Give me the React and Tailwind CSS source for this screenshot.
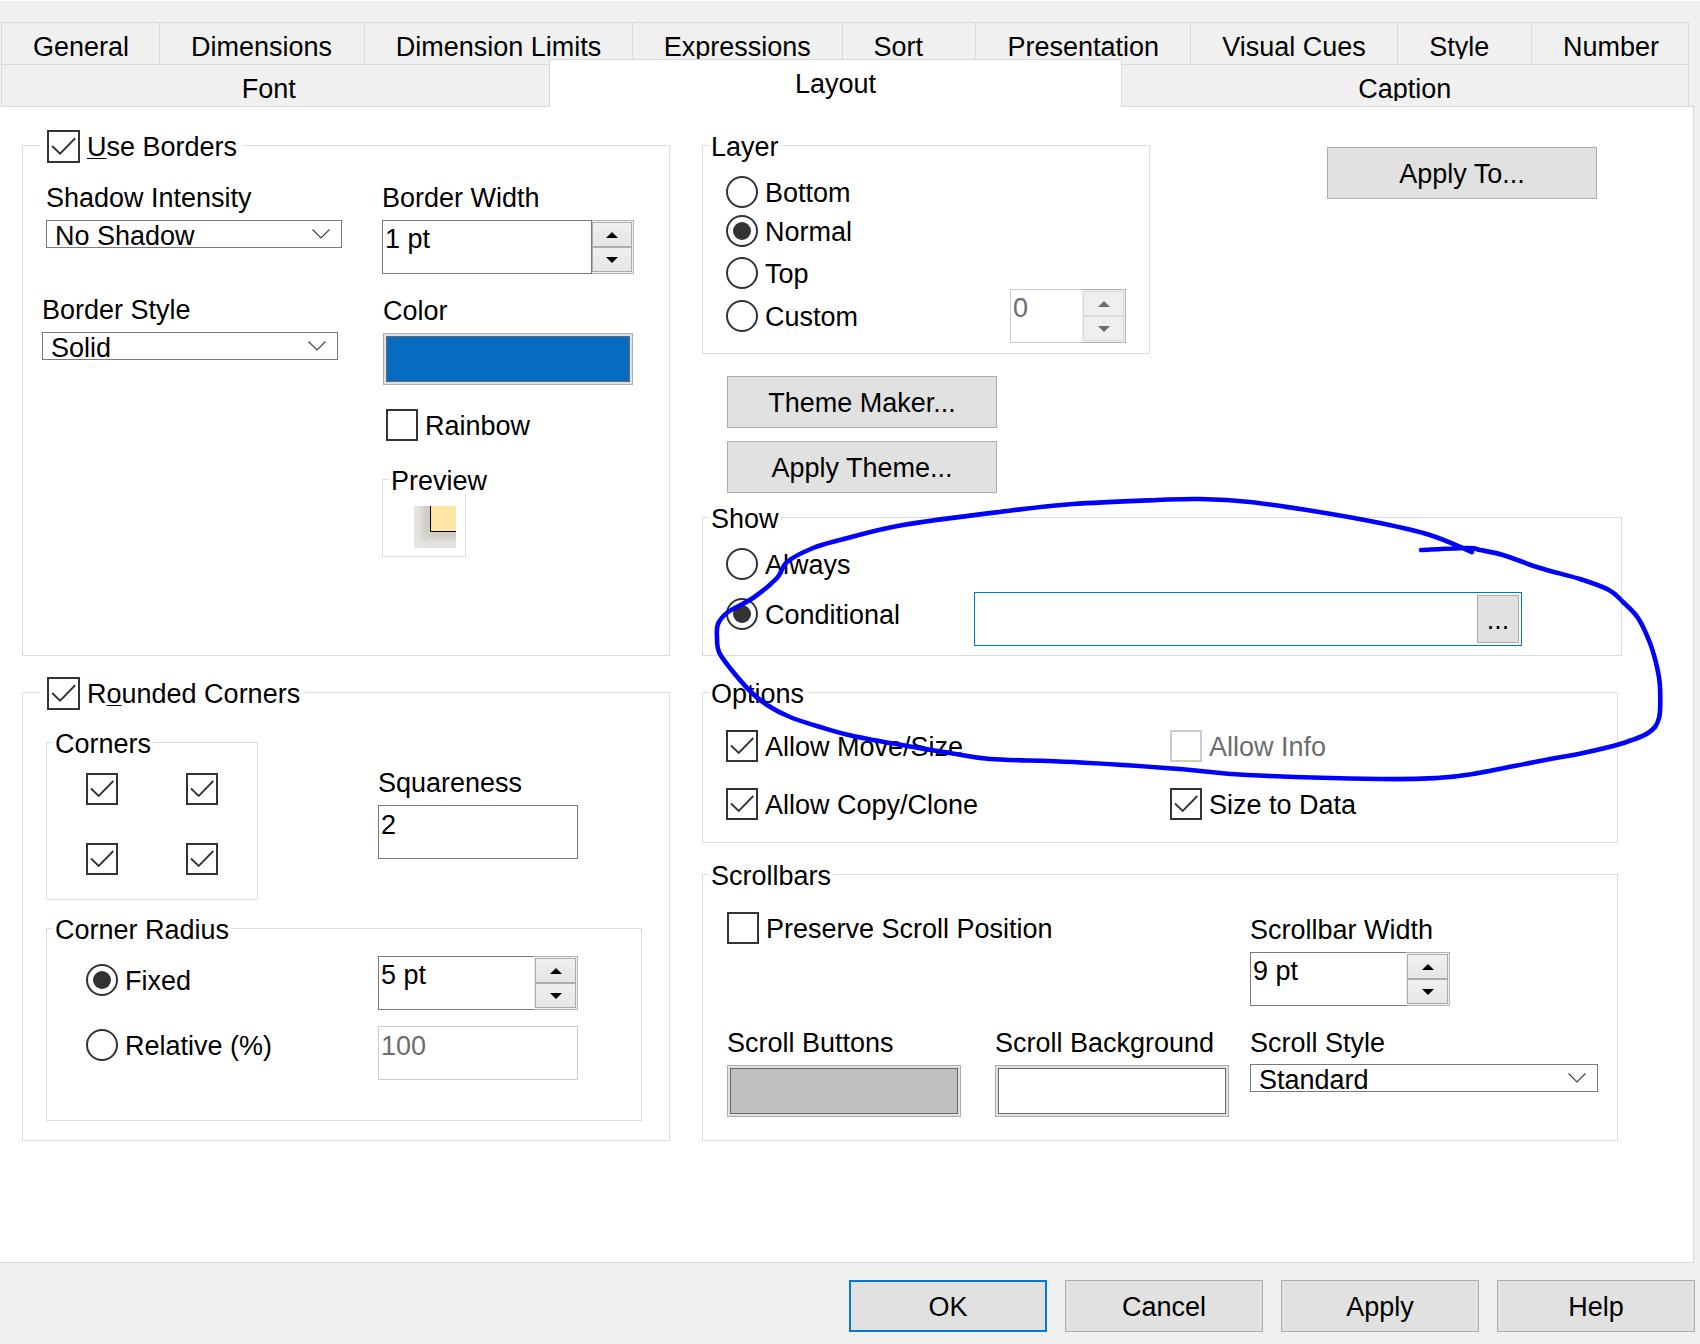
import React, { useId } from "react";

const BASE_TABS = [
  { name: "General" },
  { name: "Dimensions" },
  { name: "Dimension Limits" },
  { name: "Expressions" },
  { name: "Sort" },
  { name: "Presentation" },
  { name: "Visual Cues" },
  { name: "Style", clip: true },
  { name: "Number" },
];

// Points of the hand-drawn loop around the Show group.
const LOOP = [
  [1421, 550], [1468, 548], [1480, 550], [1503, 555], [1540, 568], [1580, 579], [1609, 590],
  [1623, 602], [1638, 618], [1650, 643], [1657, 667], [1660, 687], [1659, 718],
  [1648, 733], [1620, 744], [1583, 753], [1540, 761], [1473, 774], [1437, 778],
  [1380, 779], [1247, 775], [1180, 769], [1073, 762], [990, 759], [950, 753],
  [907, 746], [853, 736], [820, 727], [790, 717], [767, 705], [750, 691],
  [730, 668], [719, 652], [717, 638], [718, 624], [728, 612], [753, 598],
  [777, 578], [787, 562], [813, 548], [840, 540], [903, 525], [1007, 511],
  [1073, 504], [1157, 500], [1200, 499], [1250, 502], [1313, 511], [1380, 523],
  [1430, 535], [1472, 552],
];

function smoothPath(points) {
  let d = `M${points[0][0]} ${points[0][1]}`;
  for (let i = 0; i < points.length - 1; i++) {
    const p0 = points[i - 1] || points[i];
    const p1 = points[i];
    const p2 = points[i + 1];
    const p3 = points[i + 2] || p2;
    const c1 = [p1[0] + (p2[0] - p0[0]) / 6, p1[1] + (p2[1] - p0[1]) / 6];
    const c2 = [p2[0] - (p3[0] - p1[0]) / 6, p2[1] - (p3[1] - p1[1]) / 6];
    d += `C${c1[0]} ${c1[1]} ${c2[0]} ${c2[1]} ${p2[0]} ${p2[1]}`;
  }
  return d;
}

function Group({ title, className = "", legendClass = "", children }) {
  return (
    <fieldset className={`min-w-0 border border-[#dcdcdc] ${className}`}>
      <legend className={`ml-1.5 px-0.5 pt-[3px] leading-[26px] whitespace-nowrap ${legendClass}`}>{title}</legend>
      {children}
    </fieldset>
  );
}

function CheckGroup({ title, className = "", children }) {
  return (
    <fieldset className={`min-w-0 border border-[#dcdcdc] ${className}`}>
      <legend className="ml-[17px] pt-0.5 pr-[5px] pl-[7px]">
        <Check label={title} checked large />
      </legend>
      {children}
    </fieldset>
  );
}

function Check({ label, ariaLabel, checked, disabled, large }) {
  return (
    <label
      className={`flex w-fit items-center gap-[7px] leading-[30px] whitespace-nowrap ${disabled ? "text-[#6d6d6d]" : ""}`}
    >
      <span className={`grid shrink-0 ${large ? "size-[33px]" : "size-8"}`}>
        <input
          type="checkbox"
          defaultChecked={checked}
          disabled={disabled}
          aria-label={ariaLabel}
          className="peer col-start-1 row-start-1 size-full appearance-none border-2 border-[#333] bg-white disabled:border-[#ccc]"
        />
        <svg
          viewBox="0 0 32 32"
          className="pointer-events-none invisible col-start-1 row-start-1 size-full peer-checked:visible"
          fill="none"
          stroke="#333"
          strokeWidth="1.8"
          aria-hidden="true"
        >
          <path d="M5 15.5L12.7 23L27.3 8" />
        </svg>
      </span>
      {label && <span className={large ? "" : "pt-0.5"}>{label}</span>}
    </label>
  );
}

function Radio({ label, name, checked, className = "" }) {
  return (
    <label className={`flex w-fit items-center gap-[7px] leading-[30px] whitespace-nowrap ${className}`}>
      <span className="grid size-8 shrink-0 place-items-center">
        <input
          type="radio"
          name={name}
          defaultChecked={checked}
          className="peer col-start-1 row-start-1 size-8 appearance-none rounded-full border-2 border-[#333] bg-white"
        />
        <span className="pointer-events-none invisible col-start-1 row-start-1 size-[18px] rounded-full bg-[#333] peer-checked:visible" />
      </span>
      <span className="pt-0.5">{label}</span>
    </label>
  );
}

function Dropdown({ label, value, labelClass = "mb-[7px]", className = "" }) {
  const id = useId();
  return (
    <div className={className}>
      <label htmlFor={id} className={`block leading-[30px] ${labelClass}`}>
        {label}
      </label>
      <div className="grid items-center">
        <select
          id={id}
          defaultValue={value}
          className="col-start-1 row-start-1 h-7 w-full appearance-none border border-[#7a7a7a] bg-white pt-0.5 pl-2 leading-[26px]"
        >
          <option>{value}</option>
        </select>
        <svg
          className="pointer-events-none col-start-1 row-start-1 mr-3 h-3 w-[18px] justify-self-end"
          viewBox="0 0 18 12"
          fill="none"
          stroke="#444"
          strokeWidth="1.2"
          aria-hidden="true"
        >
          <path d="M0.5 1.5L9 10L17.5 1.5" />
        </svg>
      </div>
    </div>
  );
}

function Arrow({ down, disabled }) {
  return (
    <svg width="12" height="6" viewBox="0 0 12 6" fill={disabled ? "#6d6d6d" : "#000"} aria-hidden="true">
      <path d={down ? "M0 0H12L6 6Z" : "M0 6H12L6 0Z"} />
    </svg>
  );
}

function Spinner({ id, value, ariaLabel, disabled, divider, className = "" }) {
  const step = disabled
    ? "flex h-[25px] w-full items-center justify-center border border-[#d9d9d9] bg-[#efefef]"
    : "flex h-[25px] w-full items-center justify-center border border-[#acacac] bg-linear-to-b from-[#f0f0f0] to-[#e5e5e5]";
  return (
    <div className={`flex ${className}`}>
      <input
        id={id}
        type="text"
        aria-label={ariaLabel}
        defaultValue={value}
        disabled={disabled}
        className={`min-w-0 flex-1 border-y border-l bg-white px-0.5 pt-[3px] pb-[19px] leading-[30px] ${
          disabled ? "border-[#ccc] text-[#6d6d6d]" : "border-[#7a7a7a]"
        } ${divider ? "border-r" : ""}`}
      />
      <div
        className={`shrink-0 border-y border-r border-[#b4b4b8] bg-[#f0f0f0] py-px pr-px ${
          divider ? "w-[42px]" : "w-11 pl-px"
        }`}
      >
        <button type="button" aria-label="Increase" disabled={disabled} className={step}>
          <Arrow disabled={disabled} />
        </button>
        <button type="button" aria-label="Decrease" disabled={disabled} className={step}>
          <Arrow down disabled={disabled} />
        </button>
      </div>
    </div>
  );
}

function TextBox({ id, value, disabled, ariaLabel }) {
  return (
    <input
      id={id}
      type="text"
      aria-label={ariaLabel}
      defaultValue={value}
      disabled={disabled}
      className="block w-full min-w-0 border border-[#7a7a7a] bg-white px-0.5 pt-1 pb-[18px] leading-[30px] disabled:border-[#ccc] disabled:text-[#6d6d6d]"
    />
  );
}

function Swatch({ label, color, className = "" }) {
  const id = useId();
  return (
    <div className={className}>
      <label htmlFor={id} className="mb-[7px] block leading-[30px] whitespace-nowrap">
        {label}
      </label>
      <button id={id} type="button" className="flex h-[52px] w-full border border-[#adadad] bg-[#e1e1e1] p-0.5">
        <span className={`h-full w-full border border-[#696969] ${color}`} />
      </button>
    </div>
  );
}

function Push({ children, className = "w-[270px] border border-[#adadad]" }) {
  return (
    <button type="button" className={`block h-[52px] bg-[#e1e1e1] pt-0.5 text-center leading-[30px] ${className}`}>
      {children}
    </button>
  );
}

function Tabs() {
  const tab = "flex h-[42px] items-start border-t border-[#d9d9d9]";
  const text = "mt-[9px] leading-[30px] whitespace-nowrap";
  const clipped = "mt-[9px] h-[27px] overflow-hidden leading-[30px] whitespace-nowrap";
  return (
    <nav role="tablist" aria-label="Property pages" className="mr-[11px] ml-px pt-[21px]">
      <div className="grid h-[42px] grid-cols-[158fr_205fr_268fr_210fr_134fr_215fr_207fr_134fr_157fr] border-r border-[#d9d9d9]">
        {BASE_TABS.map(({ name, clip }) => (
          <button key={name} type="button" role="tab" aria-selected="false" className={`${tab} border-l pl-[31px]`}>
            <span className={clip ? clipped : text}>{name}</span>
          </button>
        ))}
      </div>
      <div className="grid h-[42px] grid-cols-[548fr_572fr_567fr] items-start">
        <button type="button" role="tab" aria-selected="false" className={`${tab} justify-center border-l pr-3.5`}>
          <span className={text}>Font</span>
        </button>
        <button
          type="button"
          role="tab"
          aria-selected="true"
          className="relative z-10 -mt-[5px] h-12 border-x border-t border-[#d9d9d9] bg-white leading-[30px]"
        >
          Layout
        </button>
        <button type="button" role="tab" aria-selected="false" className={`${tab} justify-center border-r`}>
          <span className={clipped}>Caption</span>
        </button>
      </div>
    </nav>
  );
}

function BorderPreview() {
  return (
    <svg className="mt-3 mb-2 ml-[31px] block" width="42" height="42" viewBox="0 0 42 42" aria-hidden="true">
      <defs>
        <linearGradient id="edge-left" x1="0" x2="1" y1="0" y2="0">
          <stop offset="0" stopColor="#e8e6e4" />
          <stop offset="0.35" stopColor="#e2e0dd" />
          <stop offset="0.75" stopColor="#d0cdc6" />
          <stop offset="1" stopColor="#d0cdc4" />
        </linearGradient>
        <linearGradient id="edge-bottom" x1="0" x2="0" y1="1" y2="0">
          <stop offset="0" stopColor="#e8e6e4" />
          <stop offset="0.35" stopColor="#e2e0dd" />
          <stop offset="0.75" stopColor="#d0cdc6" />
          <stop offset="1" stopColor="#d0cdc4" />
        </linearGradient>
      </defs>
      <path d="M0 0H16V26L0 42Z" fill="url(#edge-left)" />
      <path d="M42 42V26H16L0 42Z" fill="url(#edge-bottom)" />
      <rect x="17" y="0" width="25" height="25" fill="#ffe6a6" />
      <path d="M16.5 0V25.5H42" fill="none" stroke="#000" />
    </svg>
  );
}

function Borders() {
  const widthId = useId();
  return (
    <CheckGroup
      title={
        <>
          <u className="decoration-1 underline-offset-2">U</u>se Borders
        </>
      }
    >
      <div className="grid grid-cols-[minmax(0,340fr)_minmax(0,252fr)] pt-5 pr-[35px] pb-[98px] pl-[19px]">
        <div>
          <Dropdown label="Shadow Intensity" value="No Shadow" className="mr-10 ml-1 w-[296px]" />
          <Dropdown label="Border Style" value="Solid" className="mt-[47px] w-[296px]" />
        </div>
        <div>
          <label htmlFor={widthId} className="mb-[7px] block leading-[30px]">
            Border Width
          </label>
          <Spinner id={widthId} value="1 pt" divider />
          <Swatch label="Color" color="bg-[#066cc1]" className="mt-[22px] px-px" />
          <div className="mt-6 ml-1">
            <Check label="Rainbow" />
          </div>
          <Group title="Preview" className="mt-6 w-[84px]" legendClass="w-[104px] bg-white">
            <BorderPreview />
          </Group>
        </div>
      </div>
    </CheckGroup>
  );
}

function RoundedCorners() {
  const squareId = useId();
  return (
    <CheckGroup
      className="mt-[19px]"
      title={
        <>
          R<u className="decoration-1 underline-offset-2">o</u>unded Corners
        </>
      }
    >
      <div className="pt-[18px] pr-[27px] pb-[19px] pl-[23px]">
        <div className="flex">
          <Group title="Corners" className="mr-[120px] w-[212px]">
            <div className="grid grid-cols-[32px_32px] gap-x-[68px] gap-y-[38px] pt-4 pb-6 pl-[39px]">
              <Check ariaLabel="Top left" checked />
              <Check ariaLabel="Top right" checked />
              <Check ariaLabel="Bottom left" checked />
              <Check ariaLabel="Bottom right" checked />
            </div>
          </Group>
          <div className="mt-10 w-[200px]">
            <label htmlFor={squareId} className="mb-[7px] block leading-[30px]">
              Squareness
            </label>
            <TextBox id={squareId} value="2" />
          </div>
        </div>
        <Group title="Corner Radius" className="mt-3.5">
          <div className="grid grid-cols-[minmax(0,292fr)_minmax(0,200fr)] items-start gap-y-4 pt-[13px] pr-[63px] pb-10 pl-[39px]">
            <Radio name="radius" label="Fixed" checked className="mt-2" />
            <Spinner value="5 pt" ariaLabel="Fixed radius" />
            <Radio name="radius" label="Relative (%)" className="mt-[3px]" />
            <TextBox value="100" ariaLabel="Relative radius" disabled />
          </div>
        </Group>
      </div>
    </CheckGroup>
  );
}

function LayerRow() {
  return (
    <div className="flex items-start justify-between pr-[25px]">
      <Group title="Layer" className="w-[448px]">
        <div className="flex items-end justify-between px-[23px] pt-4 pb-2.5">
          <div className="pb-[11px]">
            <Radio name="layer" label="Bottom" />
            <Radio name="layer" label="Normal" checked className="mt-[7px]" />
            <Radio name="layer" label="Top" className="mt-2.5" />
            <Radio name="layer" label="Custom" className="mt-[11px]" />
          </div>
          <Spinner value="0" ariaLabel="Custom layer" disabled className="w-[116px]" />
        </div>
      </Group>
      <div className="mt-4">
        <Push>Apply To...</Push>
      </div>
    </div>
  );
}

function Show() {
  return (
    <Group title="Show" className="mt-2.5">
      <div className="pt-4 pr-[99px] pb-[9px] pl-[23px]">
        <Radio name="show" label="Always" />
        <div className="mt-3 grid grid-cols-[minmax(0,248fr)_minmax(0,548fr)] items-start">
          <Radio name="show" label="Conditional" checked className="mt-1.5" />
          <div className="flex border border-[#0078d7] bg-white p-0.5">
            <input type="text" aria-label="Condition" className="min-w-0 flex-1 leading-[30px] outline-none" />
            <button
              type="button"
              aria-label="Edit expression"
              className="h-12 w-[42px] border border-[#adadad] bg-[#e1e1e1] pt-0.5 leading-[30px]"
            >
              ...
            </button>
          </div>
        </div>
      </div>
    </Group>
  );
}

function Options() {
  return (
    <Group title="Options" className="mt-[22px] mr-1">
      <div className="grid grid-cols-[444fr_447fr] gap-y-[26px] pt-[23px] pb-[22px] pl-[23px]">
        <Check label="Allow Move/Size" checked />
        <Check label="Allow Info" disabled />
        <Check label="Allow Copy/Clone" checked />
        <Check label="Size to Data" checked />
      </div>
    </Group>
  );
}

function Scrollbars() {
  const widthId = useId();
  return (
    <Group title="Scrollbars" className="mt-[17px] mr-1">
      <div className="grid grid-cols-[minmax(0,268fr)_minmax(0,255fr)_minmax(0,348fr)] items-start gap-y-[22px] pt-[23px] pr-[19px] pb-[23px] pl-6">
        <div className="col-span-2">
          <Check label="Preserve Scroll Position" />
        </div>
        <div className="mt-[3px] w-[200px]">
          <label htmlFor={widthId} className="mb-[7px] block leading-[30px] whitespace-nowrap">
            Scrollbar Width
          </label>
          <Spinner id={widthId} value="9 pt" />
        </div>
        <Swatch label="Scroll Buttons" color="bg-[#c0c0c0]" className="w-[234px]" />
        <Swatch label="Scroll Background" color="bg-white" className="w-[234px]" />
        <Dropdown label="Scroll Style" value="Standard" labelClass="mb-1.5" />
      </div>
    </Group>
  );
}

export default function App() {
  return (
    <div className="min-h-screen border-t border-white bg-[#f0f0f0] font-['Liberation_Sans',Arial,sans-serif] text-[27px] text-black">
      <Tabs />
      <main className="mr-1.5 grid grid-cols-[minmax(0,648fr)_minmax(0,920fr)] gap-x-8 border-t border-r border-b border-[#d9d9d9] bg-white pt-[21px] pr-[71px] pb-[121px] pl-[22px]">
        <div>
          <Borders />
          <RoundedCorners />
        </div>
        <div className="relative pt-[3px]">
          <LayerRow />
          <div className="mt-[22px] ml-[25px] grid gap-[13px]">
            <Push>Theme Maker...</Push>
            <Push>Apply Theme...</Push>
          </div>
          <Show />
          <Options />
          <Scrollbars />
          <svg
            className="pointer-events-none absolute top-[362px] left-0 h-[300px] w-[980px] max-w-none"
            viewBox="702 490 980 300"
            fill="none"
            stroke="#0000ff"
            strokeWidth="4.6"
            strokeLinecap="round"
            strokeLinejoin="round"
            aria-hidden="true"
          >
            <path d={smoothPath(LOOP)} />
          </svg>
        </div>
      </main>
      <footer className="flex justify-end gap-[18px] pt-[17px] pr-[5px] pb-3">
        <Push className="w-[198px] border-2 border-[#0078d7]">OK</Push>
        <Push className="w-[198px] border border-[#adadad]">Cancel</Push>
        <Push className="w-[198px] border border-[#adadad]">Apply</Push>
        <Push className="w-[198px] border border-[#adadad]">Help</Push>
      </footer>
    </div>
  );
}
